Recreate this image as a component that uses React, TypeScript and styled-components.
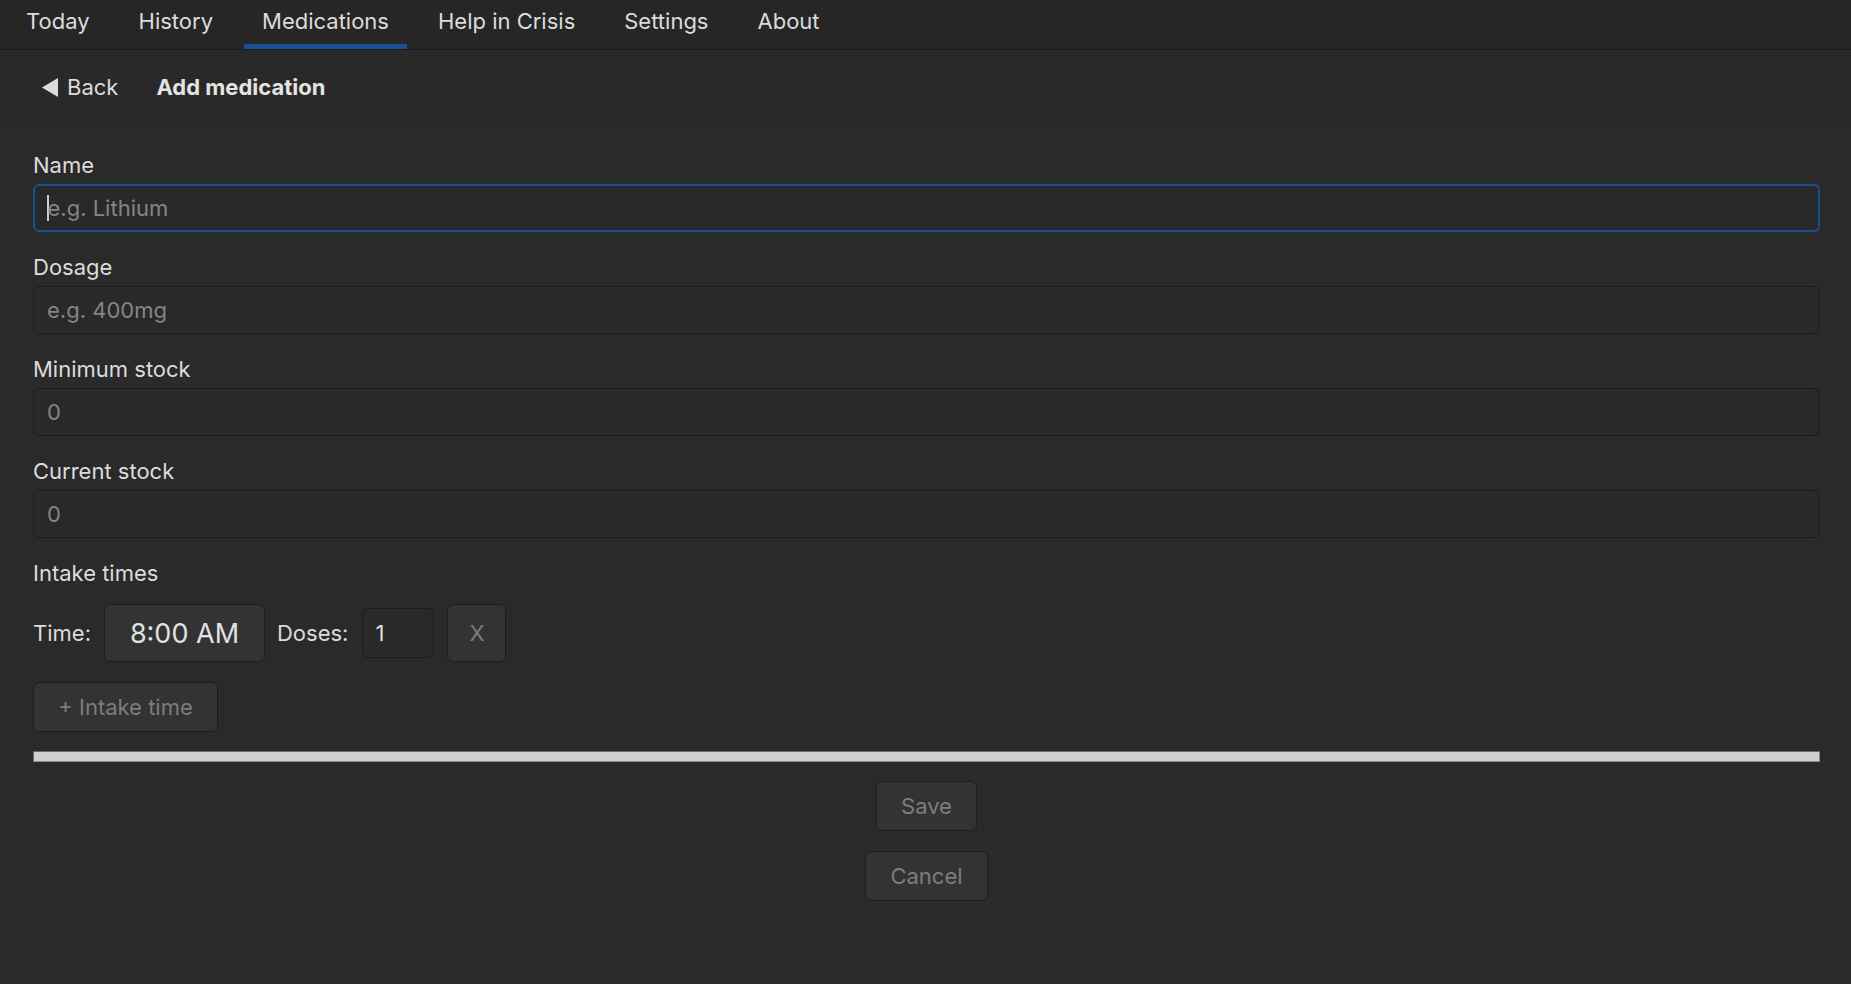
import React from "react";
import styled, { createGlobalStyle } from "styled-components";

const Global = createGlobalStyle`
  html, body { margin: 0; padding: 0; background: #2a2a2a; }
  body { font-family: Inter, "Noto Sans", sans-serif; color: #dedede; }
  * { box-sizing: border-box; }
`;

const Page = styled.div`
  min-height: 984px;
  background: #2a2a2a;
`;

const TabBar = styled.nav`
  display: flex;
  gap: 13px;
  height: 50px;
  padding-left: 8px;
  background: #262626;
  border-bottom: 1px solid #1b1b1b;
`;

const Tab = styled.div<{ $active?: boolean }>`
  display: flex;
  align-items: center;
  padding: 0 18px 2px;
  font-size: 22px;
  color: #dcdcdc;
  border-bottom: 5px solid ${(p) => (p.$active ? "#1b4f93" : "transparent")};
  height: 49px;
`;

const Header = styled.header`
  display: flex;
  align-items: center;
  gap: 38px;
  height: 75px;
  padding: 0 0 0 42px;
  background: #292929;
  border-bottom: 1px solid #242424;
`;

const BackButton = styled.div`
  display: flex;
  align-items: center;
  gap: 9px;
  font-size: 22px;
  color: #dcdcdc;
`;

const Title = styled.div`
  font-size: 22px;
  font-weight: 700;
  color: #e4e4e4;
`;

const Form = styled.main`
  display: flex;
  flex-direction: column;
  padding: 27px 31px 0 33px;
`;

const Field = styled.div`
  display: flex;
  flex-direction: column;
  gap: 6px;
  margin-bottom: 22px;
`;

const Label = styled.label`
  font-size: 22px;
  line-height: 26px;
  color: #dcdcdc;
`;

const TextInput = styled.div<{ $focused?: boolean }>`
  display: flex;
  align-items: center;
  height: 48px;
  padding: 0 13px;
  border-radius: 6px;
  background: #292929;
  border: ${(p) => (p.$focused ? "2px solid #1b4f93" : "1px solid #1c1c1c")};
  padding-left: ${(p) => (p.$focused ? "12px" : "13px")};
  font-size: 22px;
  color: #858585;
`;

const Caret = styled.span`
  display: inline-block;
  width: 1.5px;
  height: 26px;
  background: #cfcfcf;
  margin-right: -1px;
`;

const TimeRow = styled.div`
  display: flex;
  align-items: center;
  height: 58px;
  margin-top: 18px;
  font-size: 22px;
  color: #dcdcdc;
`;

const RowLabel = styled.span<{ $gap: number }>`
  margin-right: ${(p) => p.$gap}px;
`;

const TimeBox = styled.div`
  display: flex;
  align-items: center;
  justify-content: center;
  width: 161px;
  height: 58px;
  margin-right: 12px;
  background: #333333;
  border: 1px solid #1d1d1d;
  border-radius: 6px;
  font-size: 27px;
  color: #e2e2e2;
`;

const DoseInput = styled.div`
  display: flex;
  align-items: center;
  width: 72px;
  height: 50px;
  padding-left: 12px;
  margin-right: 13px;
  background: #292929;
  border: 1px solid #1c1c1c;
  border-radius: 6px;
  font-size: 22px;
  color: #dedede;
`;

const Button = styled.button<{ $w?: number; $h?: number }>`
  display: flex;
  align-items: center;
  justify-content: center;
  width: ${(p) => (p.$w ? `${p.$w}px` : "auto")};
  height: ${(p) => (p.$h ? `${p.$h}px` : "50px")};
  padding: 0;
  background: #333333;
  border: 1px solid #1d1d1d;
  border-radius: 6px;
  font-family: Inter, "Noto Sans", sans-serif;
  font-size: 22px;
  color: #7d7d7d;
`;

const AddRow = styled.div`
  display: flex;
  margin-top: 20px;
`;

const Progress = styled.div`
  height: 11px;
  margin-top: 19px;
  background: #d0d0d0;
  border: 1px solid #6b6b6b;
  border-right-color: #8a8a8a;
  border-bottom-color: #8a8a8a;
`;

const Actions = styled.div`
  display: flex;
  flex-direction: column;
  align-items: center;
  gap: 20px;
  margin-top: 19px;
`;

const tabs = ["Today", "History", "Medications", "Help in Crisis", "Settings", "About"];

const fields = [
  { label: "Name", placeholder: "e.g. Lithium", focused: true },
  { label: "Dosage", placeholder: "e.g. 400mg" },
  { label: "Minimum stock", placeholder: "0" },
  { label: "Current stock", placeholder: "0" },
];

export default function App() {
  return (
    <Page>
      <Global />
      <TabBar>
        {tabs.map((t) => (
          <Tab key={t} $active={t === "Medications"}>
            {t}
          </Tab>
        ))}
      </TabBar>
      <Header>
        <BackButton>
          <svg width="16" height="19" viewBox="0 0 16 19">
            <path d="M16 0 L16 19 L0 9.5 Z" fill="#dcdcdc" />
          </svg>
          Back
        </BackButton>
        <Title>Add medication</Title>
      </Header>
      <Form>
        {fields.map((f) => (
          <Field key={f.label}>
            <Label>{f.label}</Label>
            <TextInput $focused={f.focused}>
              {f.focused && <Caret />}
              {f.placeholder}
            </TextInput>
          </Field>
        ))}
        <Label>Intake times</Label>
        <TimeRow>
          <RowLabel $gap={13}>Time:</RowLabel>
          <TimeBox>8:00 AM</TimeBox>
          <RowLabel $gap={14}>Doses:</RowLabel>
          <DoseInput>1</DoseInput>
          <Button $w={59} $h={58}>X</Button>
        </TimeRow>
        <AddRow>
          <Button $w={185}>+ Intake time</Button>
        </AddRow>
        <Progress />
        <Actions>
          <Button $w={101}>Save</Button>
          <Button $w={123}>Cancel</Button>
        </Actions>
      </Form>
    </Page>
  );
}
